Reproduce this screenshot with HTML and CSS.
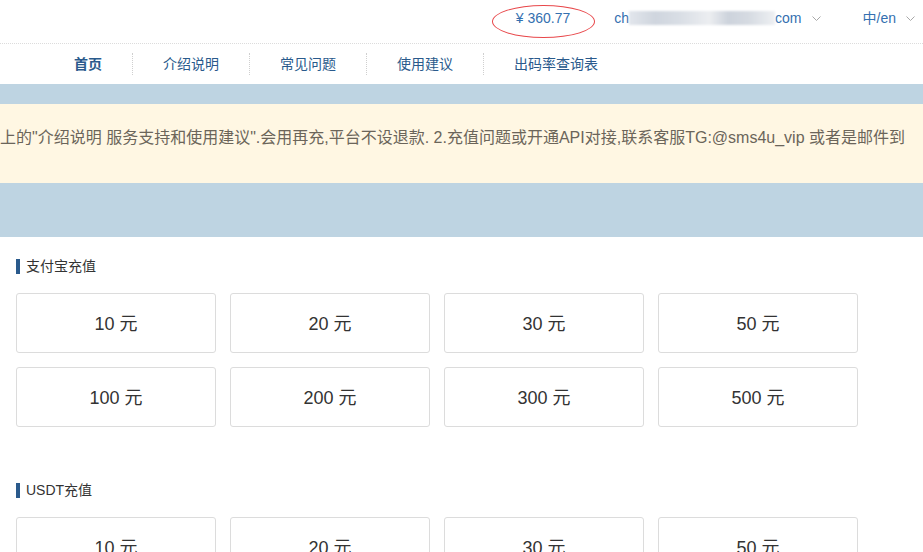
FILE: index.html
```html
<!DOCTYPE html>
<html lang="zh-CN">

<head>
    <meta charset="UTF-8">
    <meta name="viewport" content="width=device-width, initial-scale=1.0">
    <title>充值</title>
    <link rel="stylesheet" href="styles.css">
</head>

<body>

    <!-- Barra superior: saldo, cuenta, idioma -->
    <div class="topbar">
        <span class="balance">¥&nbsp;360.77<span class="circle-mark"></span></span>
        <span class="account">ch<span class="blurred"></span>com
            <svg class="chevron" width="9" height="5" viewBox="0 0 9 5"><polyline points="0.5,0.5 4.5,4.5 8.5,0.5" /></svg>
        </span>
        <span class="lang">中/en
            <svg class="chevron" width="9" height="5" viewBox="0 0 9 5"><polyline points="0.5,0.5 4.5,4.5 8.5,0.5" /></svg>
        </span>
    </div>

    <!-- Menu principal -->
    <nav class="nav">
        <a class="nav-item active">首页</a>
        <a class="nav-item">介绍说明</a>
        <a class="nav-item">常见问题</a>
        <a class="nav-item">使用建议</a>
        <a class="nav-item">出码率查询表</a>
    </nav>

    <!-- Aviso -->
    <div class="notice-band">
        <div class="notice">
            <div class="notice-text">上的"介绍说明 服务支持和使用建议".会用再充,平台不设退款. 2.充值问题或开通API对接,联系客服TG:@sms4u_vip 或者是邮件到</div>
        </div>
    </div>

    <div class="recharge">
        <div class="section">
            <h3 class="section-title">支付宝充值</h3>
            <div class="amounts">
                <div class="amount">10 元</div>
                <div class="amount">20 元</div>
                <div class="amount">30 元</div>
                <div class="amount">50 元</div>
                <div class="amount">100 元</div>
                <div class="amount">200 元</div>
                <div class="amount">300 元</div>
                <div class="amount">500 元</div>
            </div>
        </div>

        <div class="section">
            <h3 class="section-title">USDT充值</h3>
            <div class="amounts">
                <div class="amount">10 元</div>
                <div class="amount">20 元</div>
                <div class="amount">30 元</div>
                <div class="amount">50 元</div>
            </div>
        </div>
    </div>

</body>

</html>
```

FILE: styles.css
```css
/* Estilos generales */
body {
    margin: 0;
    overflow: hidden;
    font-family: "Liberation Sans", "Noto Sans CJK SC", sans-serif;
    font-size: 14px;
    color: #333;
    background-color: #fff;
}

/* Barra superior */
.topbar {
    height: 44px;
    box-sizing: border-box;
    padding: 8px 8px 0 0;
    line-height: 20px;
    display: flex;
    justify-content: flex-end;
    align-items: flex-start;
    gap: 41px;
    color: #3470b0;
    border-bottom: 1px dotted #dcdcdc;
}

.balance {
    position: relative;
    margin-right: 3px;
}

.circle-mark {
    position: absolute;
    left: -24px;
    top: -3px;
    width: 101px;
    height: 31px;
    border: 1px solid #e8474a;
    border-radius: 50%;
}

.account,
.lang {
    display: flex;
    align-items: center;
}

.lang {
    margin-left: 1px;
}

.blurred {
    display: inline-block;
    width: 146px;
    height: 14px;
    background: linear-gradient(90deg, #e2e6ec 0%, #cfd5de 18%, #d9dee5 35%, #eceef1 55%, #cdd3dc 68%, #d6dbe2 82%, #eef0f3 100%);
    filter: blur(1px);
}

.chevron {
    margin-left: 10px;
    fill: none;
    stroke: #a8a8a8;
    stroke-width: 1;
}

/* Menu */
.nav {
    height: 40px;
    display: flex;
    align-items: center;
    padding-left: 44px;
}

.nav-item {
    padding: 0 30px;
    line-height: 22px;
    color: #2a5a8c;
    border-left: 1px dotted #cfcfcf;
    cursor: pointer;
}

.nav-item:first-child {
    border-left: none;
}

.nav-item.active {
    font-weight: bold;
}

/* Aviso */
.notice-band {
    background-color: #bed4e2;
    padding: 20px 0 54px;
}

.notice {
    height: 79px;
    background-color: #fff7e3;
    overflow: hidden;
}

.notice-text {
    white-space: nowrap;
    font-size: 16px;
    line-height: 20px;
    padding-top: 24px;
    color: #6b655a;
}

/* Recarga */
.recharge {
    padding: 19px 16px 0;
}

.section + .section {
    margin-top: 53px;
}

.section-title {
    margin: 0 0 17px;
    font-size: 14px;
    font-weight: normal;
    line-height: 20px;
    color: #333;
    display: flex;
    align-items: center;
}

.section-title::before {
    content: "";
    width: 4px;
    height: 15px;
    background-color: #2a5a8c;
    margin-right: 6px;
}

.amounts {
    display: grid;
    grid-template-columns: repeat(4, 200px);
    gap: 14px;
}

.amount {
    height: 60px;
    box-sizing: border-box;
    padding-bottom: 2px;
    border: 1px solid #dcdcdc;
    border-radius: 3px;
    display: flex;
    justify-content: center;
    align-items: center;
    font-size: 18px;
    color: #333;
    cursor: pointer;
}
```
